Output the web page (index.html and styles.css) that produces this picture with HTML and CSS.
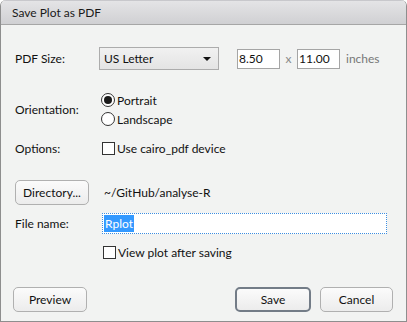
FILE: index.html
```html
<!DOCTYPE html>
<html>
	<head>
		<link rel="stylesheet" href="styles.css">
	</head>
	<body>
		<div class="window">
			<div class="titlebar">Save Plot as PDF</div>
			<div class="content">
				<div class="row row-size">
					<div class="label">PDF Size:</div>
					<div class="select">
						<span>US Letter</span>
						<span class="arrow"></span>
					</div>
					<input class="num num-w" type="text" value="8.50"/>
					<span class="times">x</span>
					<input class="num num-h" type="text" value="11.00"/>
					<span class="unit">inches</span>
				</div>
				<div class="row row-orient">
					<div class="label">Orientation:</div>
					<div class="radios">
						<div class="choice"><span class="radio checked"></span>Portrait</div>
						<div class="choice"><span class="radio"></span>Landscape</div>
					</div>
				</div>
				<div class="row row-options">
					<div class="label">Options:</div>
					<div class="choice"><span class="check"></span>Use cairo_pdf device</div>
				</div>
				<div class="row row-dir">
					<button class="btn btn-dir">Directory...</button>
					<span class="path">~/GitHub/analyse-R</span>
				</div>
				<div class="row row-file">
					<div class="label">File name:</div>
					<div class="filename"><span class="selected">Rplot</span></div>
				</div>
				<div class="row row-view">
					<div class="label"></div>
					<div class="choice"><span class="check"></span>View plot after saving</div>
				</div>
				<div class="footer">
					<button class="btn btn-preview">Preview</button>
					<div class="spacer"></div>
					<button class="btn btn-save">Save</button>
					<button class="btn btn-cancel">Cancel</button>
				</div>
			</div>
		</div>
	</body>
</html>
```
FILE: styles.css
```css
*{
	margin: 0;
	padding: 0;
	box-sizing: border-box;
}
html,body{
	width: 100%;
	height: 100%;
	background: #ffffff;
}
body{
	font-family: Lato, "Noto Sans", sans-serif;
	font-size: 12px;
	color: #111;
}
.window{
	width: 407px;
	height: 322px;
	background: #f2f3f2;
	border: 1px solid #8e8e8e;
	border-top: none;
	border-radius: 6px 6px 0 0;
	overflow: hidden;
}
.titlebar{
	height: 25px;
	padding-left: 11px;
	line-height: 23px;
	color: #1a1a1a;
	background: linear-gradient(#e4e4e6, #d0d0d3);
	border-bottom: 1px solid #a6a6a6;
	border-top: 1px solid #c8c8cc;
}
.content{
	padding: 0 13px 0 13px;
}
.row{
	display: flex;
	align-items: center;
}
.label{
	width: 85px;
	flex-shrink: 0;
	padding-left: 1px;
}
.row-size{
	margin-top: 22px;
	height: 23px;
}
.select{
	width: 120px;
	height: 23px;
	border: 1px solid #acacac;
	background: linear-gradient(#f1f1f1, #e4e4e4);
	display: flex;
	align-items: center;
	justify-content: space-between;
	padding: 0 7px 0 4px;
}
.arrow{
	width: 0;
	height: 0;
	border-left: 4px solid transparent;
	border-right: 4px solid transparent;
	border-top: 4px solid #111;
}
.num{
	height: 20px;
	border: 1px solid #a5a5a5;
	background: #fff;
	font: inherit;
	color: #111;
	padding-left: 1px;
	outline: none;
}
.num-w{
	width: 43px;
	margin-left: 18px;
}
.num-h{
	width: 43px;
}
.times{
	color: #888;
	width: 17px;
	text-align: center;
}
.unit{
	color: #777;
	margin-left: 6px;
}
.row-orient{
	margin-top: 22px;
}
.radios{
	display: flex;
	flex-direction: column;
	gap: 3px;
	margin-left: 2px;
}
.choice{
	display: flex;
	align-items: center;
	height: 16px;
}
.radio{
	width: 14px;
	height: 14px;
	border: 1px solid #333;
	border-radius: 50%;
	background: #fff;
	margin-right: 2px;
	display: flex;
	align-items: center;
	justify-content: center;
}
.radio.checked::after{
	content: "";
	width: 8px;
	height: 8px;
	border-radius: 50%;
	background: #1a1a1a;
}
.check{
	width: 13px;
	height: 13px;
	border: 1px solid #333;
	background: #fff;
	margin-right: 2px;
	margin-left: 3px;
}
.row-options{
	margin-top: 13px;
}
.row-dir{
	margin-top: 24px;
}
.btn{
	font: inherit;
	color: #111;
	height: 25px;
	border: 1px solid #b0b0b0;
	border-radius: 5px;
	background: linear-gradient(#fbfbfb, #ececec);
}
.btn-dir{
	width: 74px;
	margin-left: 1px;
}
.path{
	margin-left: 15px;
}
.row-file{
	margin-top: 8px;
}
.filename{
	width: 285px;
	height: 21px;
	margin-left: 3px;
	background: #fff;
	border: 1px dotted #3d8ee0;
	display: flex;
	align-items: center;
	padding-left: 1px;
}
.selected{
	background: #3399ff;
	color: #fff;
	line-height: 17px;
	padding: 0 1px;
}
.row-view{
	margin-top: 10px;
}
.row-view .check{
	margin-left: 4px;
}
.footer{
	display: flex;
	margin-top: 27px;
}
.spacer{
	flex: 1;
}
.btn-preview{
	width: 74px;
	margin-left: -1px;
}
.btn-save{
	width: 76px;
	border: 2px solid #737c87;
}
.btn-cancel{
	width: 73px;
	margin-left: 9px;
}
```
